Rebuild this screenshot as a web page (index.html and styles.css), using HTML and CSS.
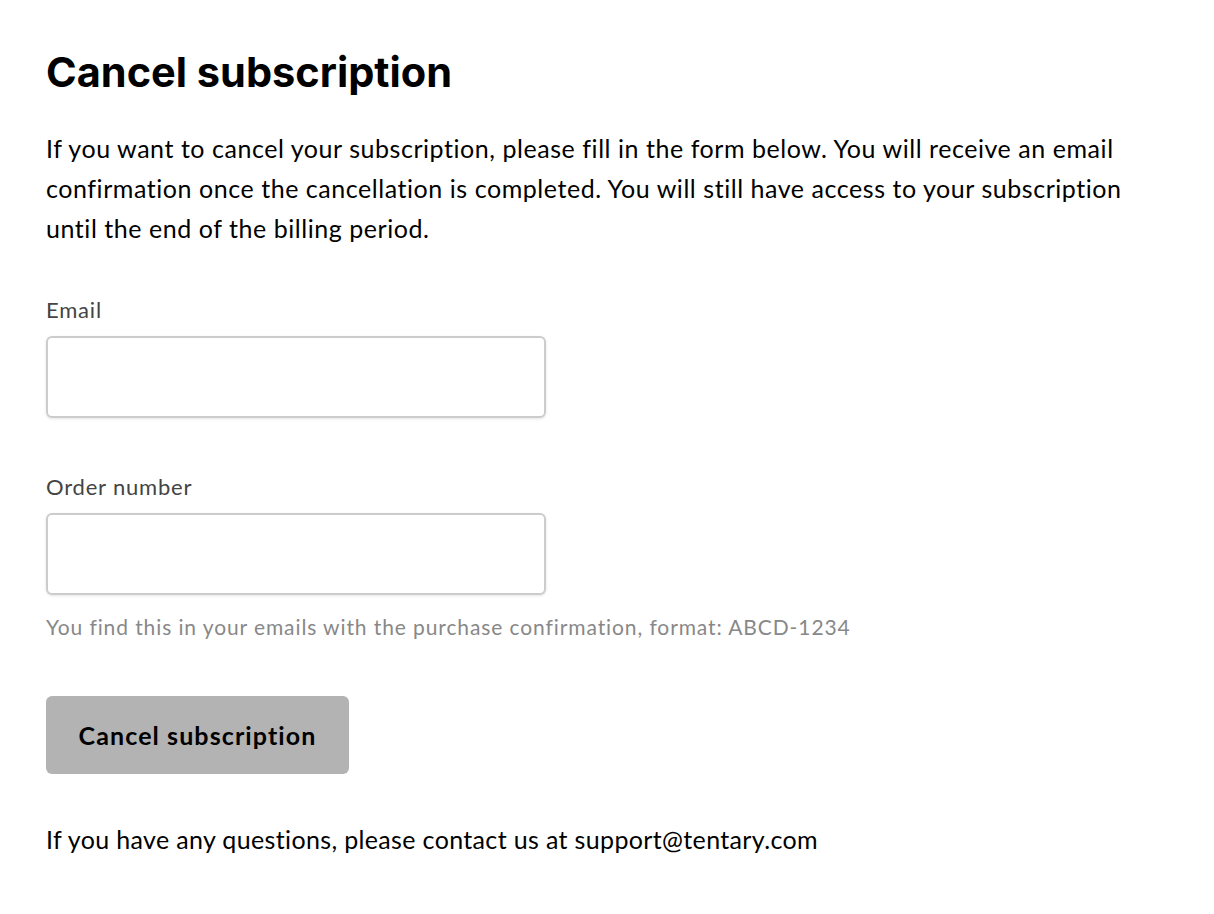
FILE: index.html
```html
<!DOCTYPE html>
<html lang="en">
<head>
    <meta charset="UTF-8">
    <meta name="viewport" content="width=device-width, initial-scale=1.0">
    <link rel="stylesheet" href="styles.css">
    <title>Cancel subscription</title>
</head>
<body>
    <div class="page">
        <h1>Cancel subscription</h1>
        <p class="intro">If you want to cancel your subscription, please fill in the form below. You will receive an email confirmation once the cancellation is completed. You will still have access to your subscription until the end of the billing period.</p>

        <form class="cancel-form">
            <div class="field">
                <label for="email">Email</label>
                <input type="email" id="email">
            </div>
            <div class="field">
                <label for="order">Order number</label>
                <input type="text" id="order">
                <span class="hint">You find this in your emails with the purchase confirmation, format: ABCD-1234</span>
            </div>
            <button type="submit">Cancel subscription</button>
        </form>

        <p class="contact">If you have any questions, please contact us at support@tentary.com</p>
    </div>
</body>
</html>
```

FILE: styles.css
```css
body {
    margin: 0;
    padding: 0;
    background-color: #fff;
    color: #000;
    font-family: Lato, "Open Sans", sans-serif;
}

.page {
    padding: 46px 46px 40px;
    max-width: 1090px;
}

h1 {
    font-family: Inter, sans-serif;
    font-size: 41.5px;
    font-weight: 700;
    margin: 0 0 30px;
    line-height: 52px;
}

.intro {
    font-size: 25px;
    letter-spacing: 0.55px;
    line-height: 40px;
    margin: 0 0 47px;
}

.cancel-form {
    display: flex;
    flex-direction: column;
    align-items: flex-start;
}

.field {
    display: flex;
    flex-direction: column;
    align-items: flex-start;
    margin-bottom: 54px;
}

label {
    font-size: 22px;
    letter-spacing: 0.8px;
    color: #444;
    line-height: 30px;
    margin-bottom: 11px;
}

input {
    width: 500px;
    height: 82px;
    box-sizing: border-box;
    border: 2px solid #ccc;
    border-radius: 6px;
    box-shadow: 0 1px 3px rgba(0, 0, 0, 0.1);
    padding: 10px 16px;
    font-size: 20px;
    font-family: inherit;
}

.hint {
    font-size: 21px;
    letter-spacing: 0.9px;
    color: #888;
    margin-top: 17px;
    line-height: 30px;
}

button {
    background-color: #b3b3b3;
    color: #000;
    border: none;
    border-radius: 6px;
    width: 303px;
    height: 78px;
    font-family: inherit;
    font-size: 25px;
    letter-spacing: 1.1px;
    font-weight: 700;
    cursor: pointer;
}

.contact {
    font-size: 25px;
    letter-spacing: 0.35px;
    line-height: 40px;
    margin: 45px 0 0;
}
```
